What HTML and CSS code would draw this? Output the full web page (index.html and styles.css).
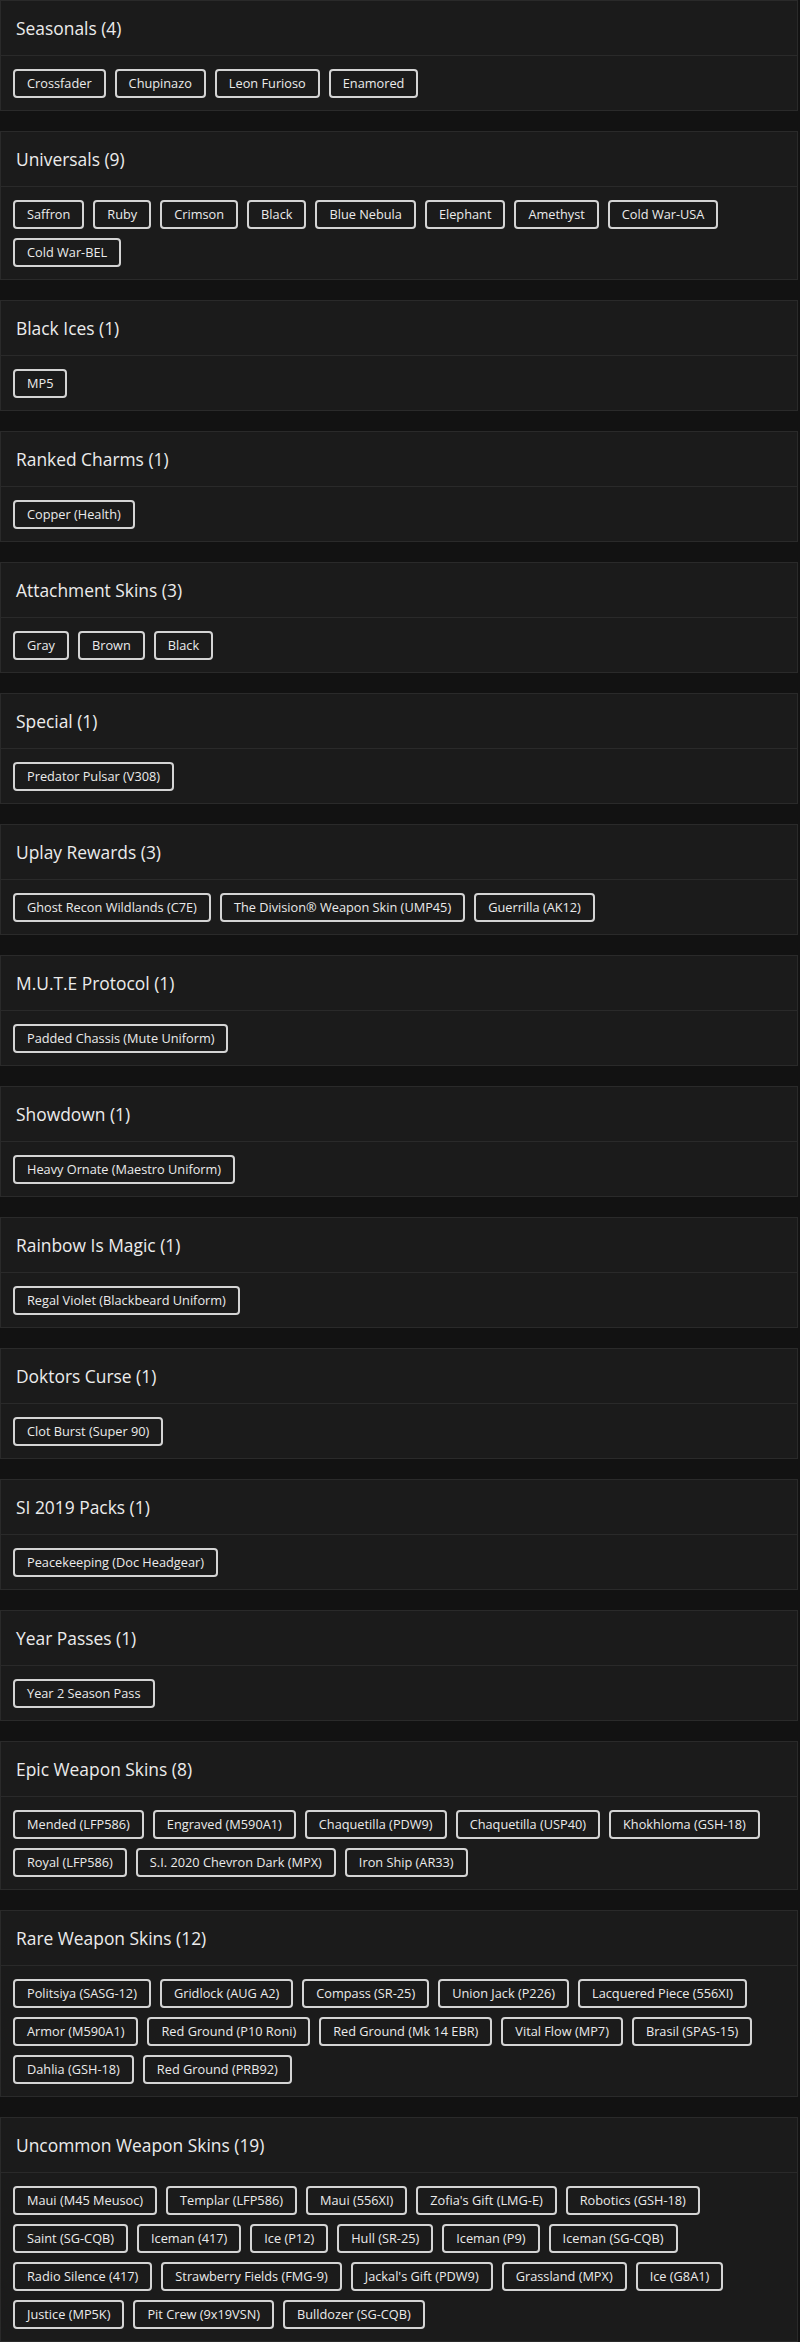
FILE: index.html
```html
<!DOCTYPE html>
<html lang="en">
<head>
<meta charset="utf-8">
<title>Items</title>
<link rel="stylesheet" href="styles.css">
</head>
<body>
<main class="list">
  <section class="card">
    <header class="card-head"><h2 class="card-title">Seasonals (4)</h2></header>
    <div class="card-body">
      <span class="tag">Crossfader</span><span class="tag">Chupinazo</span><span class="tag">Leon Furioso</span><span class="tag">Enamored</span>
    </div>
  </section>
  <section class="card">
    <header class="card-head"><h2 class="card-title">Universals (9)</h2></header>
    <div class="card-body">
      <span class="tag">Saffron</span><span class="tag">Ruby</span><span class="tag">Crimson</span><span class="tag">Black</span><span class="tag">Blue Nebula</span><span class="tag">Elephant</span><span class="tag">Amethyst</span><span class="tag">Cold War-USA</span><span class="tag">Cold War-BEL</span>
    </div>
  </section>
  <section class="card">
    <header class="card-head"><h2 class="card-title">Black Ices (1)</h2></header>
    <div class="card-body"><span class="tag">MP5</span></div>
  </section>
  <section class="card">
    <header class="card-head"><h2 class="card-title">Ranked Charms (1)</h2></header>
    <div class="card-body"><span class="tag">Copper (Health)</span></div>
  </section>
  <section class="card">
    <header class="card-head"><h2 class="card-title">Attachment Skins (3)</h2></header>
    <div class="card-body"><span class="tag">Gray</span><span class="tag">Brown</span><span class="tag">Black</span></div>
  </section>
  <section class="card">
    <header class="card-head"><h2 class="card-title">Special (1)</h2></header>
    <div class="card-body"><span class="tag">Predator Pulsar (V308)</span></div>
  </section>
  <section class="card">
    <header class="card-head"><h2 class="card-title">Uplay Rewards (3)</h2></header>
    <div class="card-body"><span class="tag">Ghost Recon Wildlands (C7E)</span><span class="tag">The Division® Weapon Skin (UMP45)</span><span class="tag">Guerrilla (AK12)</span></div>
  </section>
  <section class="card">
    <header class="card-head"><h2 class="card-title">M.U.T.E Protocol (1)</h2></header>
    <div class="card-body"><span class="tag">Padded Chassis (Mute Uniform)</span></div>
  </section>
  <section class="card">
    <header class="card-head"><h2 class="card-title">Showdown (1)</h2></header>
    <div class="card-body"><span class="tag">Heavy Ornate (Maestro Uniform)</span></div>
  </section>
  <section class="card">
    <header class="card-head"><h2 class="card-title">Rainbow Is Magic (1)</h2></header>
    <div class="card-body"><span class="tag">Regal Violet (Blackbeard Uniform)</span></div>
  </section>
  <section class="card">
    <header class="card-head"><h2 class="card-title">Doktors Curse (1)</h2></header>
    <div class="card-body"><span class="tag">Clot Burst (Super 90)</span></div>
  </section>
  <section class="card">
    <header class="card-head"><h2 class="card-title">SI 2019 Packs (1)</h2></header>
    <div class="card-body"><span class="tag">Peacekeeping (Doc Headgear)</span></div>
  </section>
  <section class="card">
    <header class="card-head"><h2 class="card-title">Year Passes (1)</h2></header>
    <div class="card-body"><span class="tag">Year 2 Season Pass</span></div>
  </section>
  <section class="card">
    <header class="card-head"><h2 class="card-title">Epic Weapon Skins (8)</h2></header>
    <div class="card-body">
      <span class="tag">Mended (LFP586)</span><span class="tag">Engraved (M590A1)</span><span class="tag">Chaquetilla (PDW9)</span><span class="tag">Chaquetilla (USP40)</span><span class="tag">Khokhloma (GSH-18)</span><span class="tag">Royal (LFP586)</span><span class="tag">S.I. 2020 Chevron Dark (MPX)</span><span class="tag">Iron Ship (AR33)</span>
    </div>
  </section>
  <section class="card">
    <header class="card-head"><h2 class="card-title">Rare Weapon Skins (12)</h2></header>
    <div class="card-body">
      <span class="tag">Politsiya (SASG-12)</span><span class="tag">Gridlock (AUG A2)</span><span class="tag">Compass (SR-25)</span><span class="tag">Union Jack (P226)</span><span class="tag">Lacquered Piece (556XI)</span><span class="tag">Armor (M590A1)</span><span class="tag">Red Ground (P10 Roni)</span><span class="tag">Red Ground (Mk 14 EBR)</span><span class="tag">Vital Flow (MP7)</span><span class="tag">Brasil (SPAS-15)</span><span class="tag">Dahlia (GSH-18)</span><span class="tag">Red Ground (PRB92)</span>
    </div>
  </section>
  <section class="card">
    <header class="card-head"><h2 class="card-title">Uncommon Weapon Skins (19)</h2></header>
    <div class="card-body">
      <span class="tag">Maui (M45 Meusoc)</span><span class="tag">Templar (LFP586)</span><span class="tag">Maui (556XI)</span><span class="tag">Zofia's Gift (LMG-E)</span><span class="tag">Robotics (GSH-18)</span><span class="tag">Saint (SG-CQB)</span><span class="tag">Iceman (417)</span><span class="tag">Ice (P12)</span><span class="tag">Hull (SR-25)</span><span class="tag">Iceman (P9)</span><span class="tag">Iceman (SG-CQB)</span><span class="tag">Radio Silence (417)</span><span class="tag">Strawberry Fields (FMG-9)</span><span class="tag">Jackal's Gift (PDW9)</span><span class="tag">Grassland (MPX)</span><span class="tag">Ice (G8A1)</span><span class="tag">Justice (MP5K)</span><span class="tag">Pit Crew (9x19VSN)</span><span class="tag">Bulldozer (SG-CQB)</span>
    </div>
  </section>
</main>
</body>
</html>
```

FILE: styles.css
```css
html, body {
  margin: 0;
  padding: 0;
}

body {
  background: #121212;
  font-family: "Open Sans", "Noto Sans", "Liberation Sans", sans-serif;
  color: #e4e4e4;
}

.list {
  display: flex;
  flex-direction: column;
  gap: 20px;
  width: 798px;
}

.card {
  background: #1b1b1b;
  border: 1px solid #2a2a2a;
}

.card-head {
  height: 54px;
  display: flex;
  align-items: center;
  padding: 0 15px;
  border-bottom: 1px solid #2a2a2a;
}

.card-title {
  margin: 0;
  font-size: 17.4px;
  font-weight: 500;
  color: #ececec;
  line-height: 20px;
}

.card-body {
  display: flex;
  flex-wrap: wrap;
  gap: 9px;
  padding: 13px 12px 12px;
}

.tag {
  display: block;
  border: 2px solid #d4d4d4;
  border-radius: 4px;
  padding: 5px 12px;
  font-size: 12.75px;
  font-weight: 500;
  line-height: 15px;
  color: #ebebeb;
  white-space: nowrap;
}
```
